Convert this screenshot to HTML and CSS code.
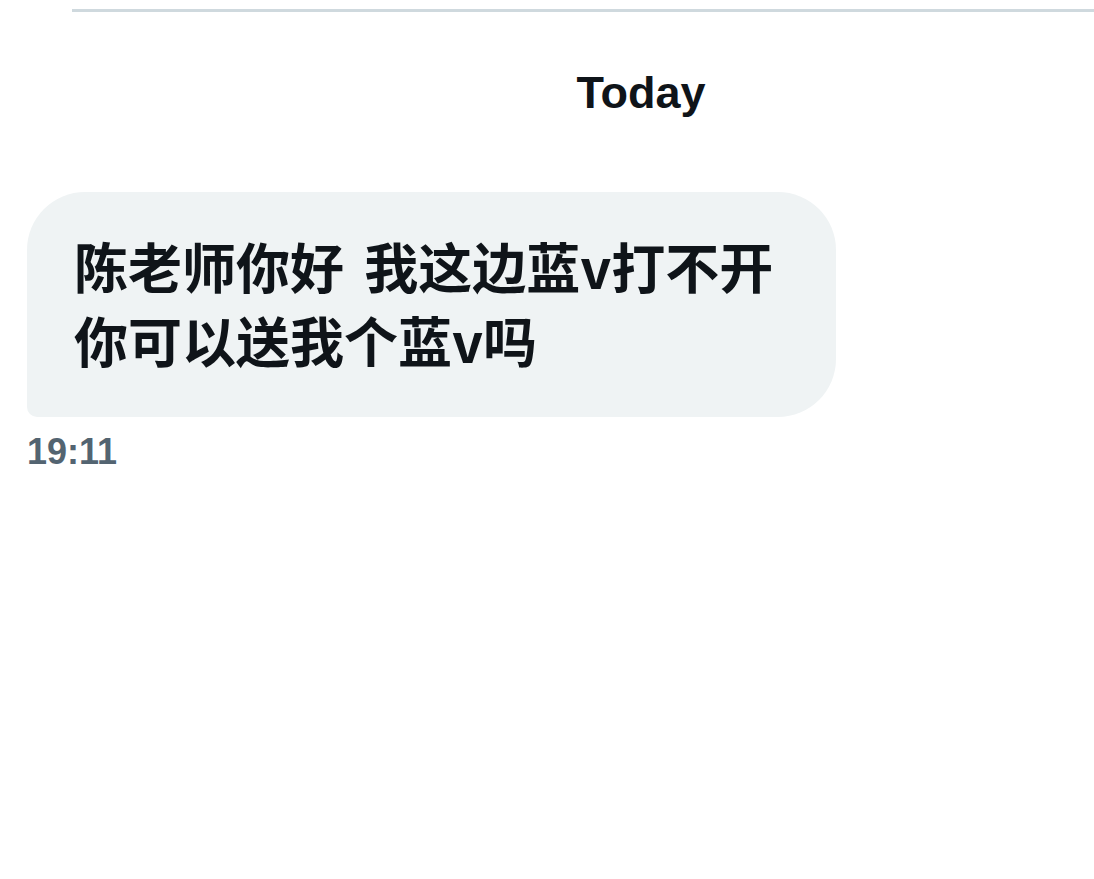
FILE: index.html
```html
<!DOCTYPE html>
<html lang="zh">
<head>
    <meta charset="UTF-8">
    <meta name="viewport" content="width=device-width, initial-scale=1.0">
    <title>Messages</title>
    <link rel="stylesheet" href="styles.css">
</head>
<body>
    <div class="divider"></div>

    <!-- Conversation -->
    <div class="conversation">
        <div class="day">Today</div>

        <div class="message">
            <div class="bubble">陈老师你好 我这边蓝v打不开 你可以送我个蓝v吗</div>
            <div class="time">19:11</div>
        </div>
    </div>
</body>
</html>
```

FILE: styles.css
```css
body {
    margin: 0;
    background: #fff;
    color: #0f1419;
    font-family: "Liberation Sans", Arial, "Noto Sans CJK SC", sans-serif;
}

.divider {
    margin: 9px 0 0 72px;
    height: 3px;
    background-color: #cfd9de;
}

/* Conversation */
.conversation {
    padding: 56px 0 0 27px;
}

.day {
    padding-left: 161px;
    text-align: center;
    font-size: 45px;
    line-height: 50px;
    font-weight: bold;
}

.message {
    margin-top: 74px;
}

.bubble {
    box-sizing: border-box;
    width: 809px;
    padding: 37px 40px 40px 47px;
    background-color: #eff3f4;
    border-radius: 58px 58px 58px 10px;
    font-family: "Noto Sans CJK SC", "Liberation Sans", sans-serif;
    font-size: 54px;
    line-height: 74px;
    font-weight: bold;
    word-spacing: 8px;
}

.time {
    margin-top: 15px;
    font-size: 36px;
    line-height: 40px;
    font-weight: bold;
    color: #536471;
}
```
